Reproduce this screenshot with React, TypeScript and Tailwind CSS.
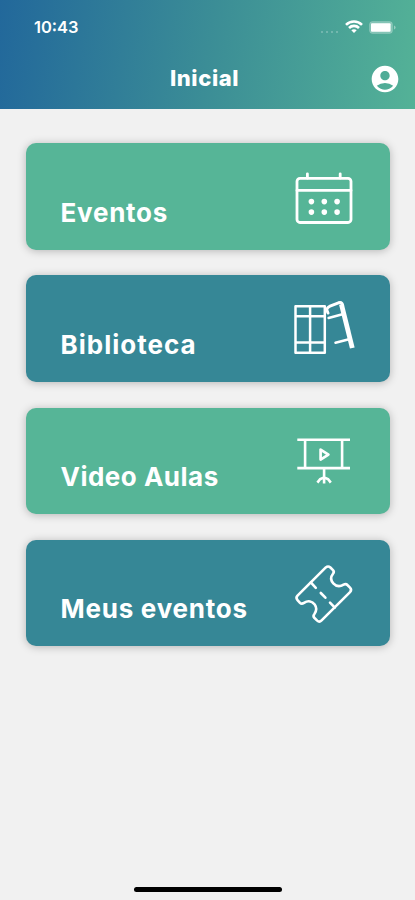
import React from 'react'
import { MdAccountCircle } from 'react-icons/md'

const CalendarIcon = () => (
  <svg width="64" height="64" viewBox="0 0 64 64" fill="none" stroke="white" strokeWidth="2.8" strokeLinecap="round">
    <rect x="5" y="13.3" width="54" height="44.2" rx="3" />
    <path d="M5 25.4H59M15.4 8.8V13M48.2 8.8V13" />
    <g fill="white" stroke="none">
      <circle cx="19.4" cy="36.6" r="2.8" />
      <circle cx="32.3" cy="36.6" r="2.8" />
      <circle cx="45.1" cy="36.6" r="2.8" />
      <circle cx="19.4" cy="47.1" r="2.8" />
      <circle cx="32.3" cy="47.1" r="2.8" />
      <circle cx="45.1" cy="47.1" r="2.8" />
    </g>
  </svg>
)

const BooksIcon = () => (
  <svg width="64" height="64" viewBox="0 0 64 64" fill="none" stroke="white" strokeWidth="2.5" strokeLinecap="round" strokeLinejoin="round">
    <path d="M3.5 9.3H32.8V55.8H3.5ZM18.1 9.3V55.8M3.5 19.2H32.8M3.5 45.4H32.8" />
    <path d="M36 16L34.6 12.6Q35.6 10.3 38 9.2L46.5 5.8Q48.8 5.1 50 6.4" strokeWidth="3" />
    <path d="M36.6 21L50.5 17.2M43.5 45.8L57 42.3" />
    <path d="M49.4 7.2L60.3 51" strokeWidth="4.8" strokeLinecap="butt" />
  </svg>
)

const VideoIcon = () => (
  <svg width="64" height="64" viewBox="0 0 64 64" fill="none" stroke="white" strokeWidth="2.6" strokeLinejoin="round">
    <path d="M5.3 9.8H58M5.3 38.1H58M13.1 9.8V38.1M50.1 9.8V38.1" />
    <path d="M28.6 19.6V29.6L36.4 24.6Z" strokeWidth="2.7" />
    <path d="M32.1 38.1V53.4M25.4 52.6L28 49.2L32.1 47.4L36.2 49.2L38.8 52.6" />
  </svg>
)

const TicketIcon = () => (
  <svg width="64" height="64" viewBox="0 0 64 64" fill="none" stroke="white" strokeWidth="2.6" strokeLinecap="round" strokeLinejoin="round">
    <path d="M33.8 5.4L5.5 33.7Q3.5 35.9 5.5 38.1L8 40.8Q9.6 42.4 12 40.9C16.2 38.3 20.3 39.3 22.7 42.6C25 45.8 24.6 49 22.4 52Q20.7 54.1 22.3 55.8L25.2 58.6Q27.4 60.6 29.6 58.4L58 30.1Q60.1 27.8 58 25.6L55.4 23Q53.9 21.4 51.6 22.7C47.5 25.1 43.8 24 41.3 21.3C38.8 18.5 38.4 15 41 11.7Q42.6 9.8 41 8.1L38.4 5.5Q36.1 3.5 33.8 5.4Z" />
    <path d="M18.8 20.4L23.8 25.8M28.8 31L33.4 35.7M38 40.6L42.8 45.6" />
  </svg>
)

const menuItems = [
  { id: 'eventos', label: 'Eventos', color: 'bg-[#56b597]', spacing: 'tracking-[0.75px]', Icon: CalendarIcon },
  { id: 'biblioteca', label: 'Biblioteca', color: 'bg-[#368796]', spacing: 'tracking-[1px]', Icon: BooksIcon },
  { id: 'video-aulas', label: 'Video Aulas', color: 'bg-[#56b597]', spacing: 'tracking-[0.5px]', Icon: VideoIcon },
  { id: 'meus-eventos', label: 'Meus eventos', color: 'bg-[#368796]', spacing: 'tracking-[0.75px]', Icon: TicketIcon }
]

const StatusBar = () => (
  <div className="flex items-center justify-between h-[54px] pl-[34px] pr-[19px]">
    <span className="text-[16.5px] font-semibold">10:43</span>
    <div className="flex items-center">
      <div className="flex gap-[2.5px] mt-2.5 mr-[7px] opacity-30">
        <span className="size-[2.5px] rounded-full bg-white" />
        <span className="size-[2.5px] rounded-full bg-white" />
        <span className="size-[2.5px] rounded-full bg-white" />
        <span className="size-[2.5px] rounded-full bg-white" />
      </div>
      <svg width="18" height="14" viewBox="0 0 18 14" fill="none" stroke="white" strokeWidth="2.6">
        <path d="M1 4.9C5.5 .4 12.5 .4 17 4.9M4 8C6.8 5.2 11.2 5.2 14 8" />
        <path d="M9 13L6.3 10.3C7.7 8.8 10.3 8.8 11.7 10.3Z" fill="white" stroke="none" />
      </svg>
      <svg className="ml-[6px]" width="27" height="13" viewBox="0 0 27 13">
        <rect x=".5" y=".5" width="23" height="12" rx="3" fill="white" fillOpacity=".3" stroke="white" strokeOpacity=".15" />
        <rect x="2" y="2.2" width="19.6" height="8.6" rx="1" fill="white" />
        <path d="M25 4.5Q26.6 5 26.6 6.5Q26.6 8 25 8.5Z" fill="white" fillOpacity=".4" />
      </svg>
    </div>
  </div>
)

const App = () => {
  return (
    <div className="flex flex-col w-full h-screen overflow-hidden bg-[#f1f1f1] text-white font-['Inter',sans-serif]">
      <header className="h-[109px] shrink-0 bg-[linear-gradient(97deg,#22689b_0%,#3b8d96_50%,#54b297_100%)]">
        <StatusBar />
        <div className="grid grid-cols-[1fr_auto_1fr] items-center h-[49px] pl-[8px] pr-[14px]">
          <span />
          <h1 className="text-[22px] font-extrabold tracking-[0.6px]">Inicial</h1>
          <button className="justify-self-end" aria-label="Perfil">
            <MdAccountCircle size={32} />
          </button>
        </div>
      </header>

      <main className="flex flex-col flex-1 gap-[25.8px] pt-[34px] pl-[26px] pr-[25px]">
        {menuItems.map(({ id, label, color, spacing, Icon }) => (
          <button
            key={id}
            className={`flex items-start justify-between h-[106.5px] pt-[22px] pl-[34.5px] pr-[34px] rounded-[10px] shadow-[0_1px_8px_rgba(0,0,0,0.25)] ${color}`}
          >
            <span className={`mt-[27.5px] text-[26px] leading-10 font-bold ${spacing}`}>{label}</span>
            <Icon />
          </button>
        ))}
      </main>

      <footer className="flex justify-center pb-2">
        <div className="w-[148px] h-[5px] rounded-full bg-black" />
      </footer>
    </div>
  )
}

export default App
